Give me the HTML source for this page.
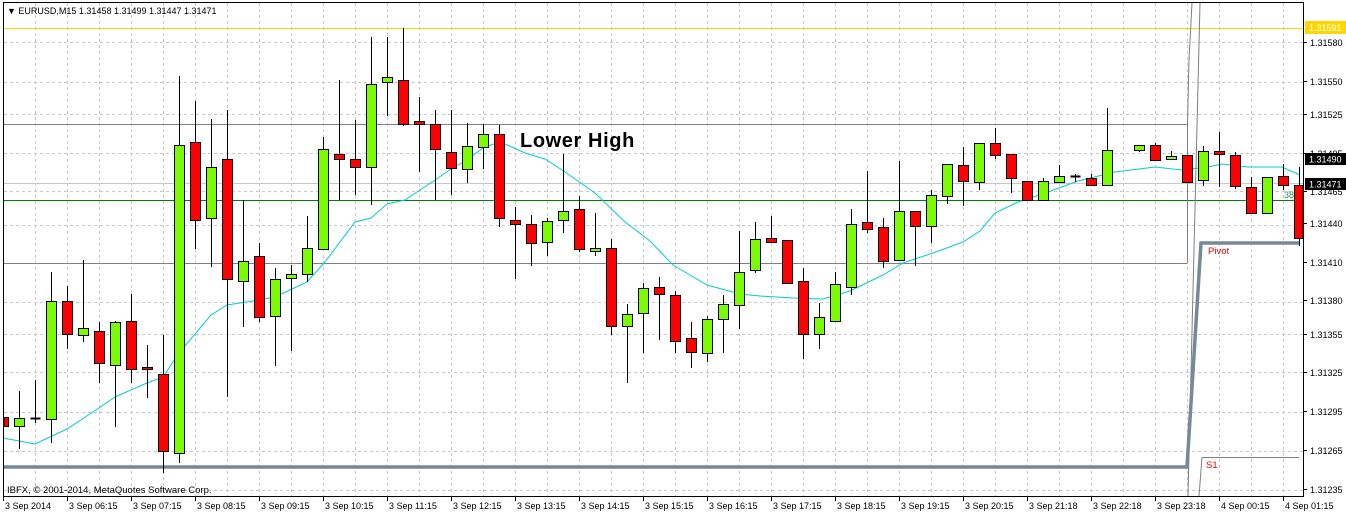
<!DOCTYPE html>
<html><head><meta charset="utf-8"><style>
html,body{margin:0;padding:0;background:#fff;width:1346px;height:514px;overflow:hidden}
svg{display:block}
text{font-family:"Liberation Sans",Arial,sans-serif}
</style></head><body>
<svg id="s" width="1346" height="514" xmlns="http://www.w3.org/2000/svg">
<rect width="1346" height="514" fill="#fff"/>
<g id="grid"></g>
<line x1="3" y1="28.5" x2="1303" y2="28.5" stroke="#ffd700" stroke-width="1"/>
<line x1="3" y1="124.5" x2="1187" y2="124.5" stroke="#808080"/>
<line x1="3" y1="183.5" x2="1303" y2="183.5" stroke="#c8c8c8"/>
<line x1="3" y1="200.5" x2="1303" y2="200.5" stroke="#008000"/>
<line x1="3" y1="263.5" x2="1187" y2="263.5" stroke="#808080"/>
<polyline points="1187.5,263 1187.5,124 1189,60 1192,3" fill="none" stroke="#808080"/>
<polyline points="1188,496 1200,3" fill="none" stroke="#808080"/>
<polyline points="1199,496 1202,457.5 1299,457.5" fill="none" stroke="#808080"/>
<polyline points="3,467 1187,467 1201,243 1300,243" fill="none" stroke="#778899" stroke-width="3.5"/>
<polyline fill="none" stroke="#00ced1" stroke-width="1" points="3,438 35,444 67,429 99,408 115,397 147,383 163,377 179,353 211,315 227,305 259,300 275,297 307,282 325,262 355,222 371,218 387,204 405,200 435,180 451,169 467,160 483,148 499,142 505,144 525,153 545,159 565,172 595,193 625,222 650,241 673,265 707,285 740,294 760,296 793,298 823,299 850,291 883,275 903,263 933,253 963,242 980,231 995,213 1018,202 1048,192 1078,181 1115,172 1155,167 1182,170 1208,167 1222,164 1248,167 1282,167 1300,175"/>
<g id="candles"></g>
<line x1="3.5" y1="2" x2="3.5" y2="497" stroke="#000"/>
<line x1="3" y1="2.5" x2="1304" y2="2.5" stroke="#000"/>
<line x1="1303.5" y1="2" x2="1303.5" y2="497" stroke="#000"/>
<line x1="3" y1="496.5" x2="1304" y2="496.5" stroke="#000"/>
<g id="ticks"></g>
<text x="7" y="14" font-size="9" fill="#000">▼ EURUSD,M15  1.31458 1.31499 1.31447 1.31471</text>
<text x="520" y="147" font-size="20" font-weight="bold" fill="#000" letter-spacing="0.6">Lower High</text>
<text x="1208" y="254" font-size="9.5" fill="#ff0000">Pivot</text>
<text x="1206" y="468" font-size="9.5" fill="#ff0000">S1</text>
<text x="1284" y="198" font-size="9" fill="#2e8b57">38</text>
<text x="7" y="493" font-size="9.5" fill="#000">IBFX, © 2001-2014, MetaQuotes Software Corp.</text>
<g font-size="9" fill="#000">
<text x="1310" y="46">1.31580</text>
<text x="1310" y="85">1.31550</text>
<text x="1310" y="118">1.31525</text>
<text x="1310" y="157">1.31495</text>
<text x="1310" y="195">1.31465</text>
<text x="1310" y="227">1.31440</text>
<text x="1310" y="266">1.31410</text>
<text x="1310" y="304">1.31380</text>
<text x="1310" y="338">1.31355</text>
<text x="1310" y="376">1.31325</text>
<text x="1310" y="415">1.31295</text>
<text x="1310" y="454">1.31265</text>
<text x="1310" y="493">1.31235</text>
</g>
<rect x="1305" y="21" width="41" height="13" fill="#ffd700"/>
<text x="1309" y="31" font-size="9" fill="#fff">1.31591</text>
<rect x="1305" y="153" width="41" height="12" fill="#000"/>
<text x="1309" y="162.5" font-size="9" fill="#fff">1.31490</text>
<rect x="1305" y="178" width="41" height="12" fill="#000"/>
<text x="1309" y="187.5" font-size="9" fill="#fff">1.31471</text>
<g font-size="9" fill="#000">
<text x="5" y="509">3 Sep 2014</text>
<text x="69" y="509">3 Sep 06:15</text>
<text x="133" y="509">3 Sep 07:15</text>
<text x="197" y="509">3 Sep 08:15</text>
<text x="261" y="509">3 Sep 09:15</text>
<text x="325" y="509">3 Sep 10:15</text>
<text x="389" y="509">3 Sep 11:15</text>
<text x="453" y="509">3 Sep 12:15</text>
<text x="517" y="509">3 Sep 13:15</text>
<text x="581" y="509">3 Sep 14:15</text>
<text x="645" y="509">3 Sep 15:15</text>
<text x="709" y="509">3 Sep 16:15</text>
<text x="773" y="509">3 Sep 17:15</text>
<text x="837" y="509">3 Sep 18:15</text>
<text x="901" y="509">3 Sep 19:15</text>
<text x="965" y="509">3 Sep 20:15</text>
<text x="1029" y="509">3 Sep 21:18</text>
<text x="1093" y="509">3 Sep 22:18</text>
<text x="1157" y="509">3 Sep 23:18</text>
<text x="1221" y="509">4 Sep 00:15</text>
<text x="1285" y="509">4 Sep 01:15</text>
</g>
</svg>
<script>
var NS="http://www.w3.org/2000/svg";
function el(p,t,a){var e=document.createElementNS(NS,t);for(var k in a)e.setAttribute(k,a[k]);p.appendChild(e);return e;}
var g=document.getElementById('grid');
[42,82,114,153,191,225,302,334,372,412,451,490].forEach(function(y){el(g,'line',{x1:4,y1:y+.5,x2:1303,y2:y+.5,stroke:'#c8c8c8','stroke-dasharray':'3,3'});});
for(var x=35.5;x<1303;x+=32)el(g,'line',{x1:x,y1:3,x2:x,y2:496,stroke:'#c8c8c8','stroke-dasharray':'3,3'});
var tk=document.getElementById('ticks');
[42,81,114,153,191,223,262,300,334,372,411,450,489].forEach(function(y){el(tk,'line',{x1:1303,y1:y+.5,x2:1307,y2:y+.5,stroke:'#000'});});
for(var x=3.5;x<1303;x+=64)el(tk,'line',{x1:x,y1:496,x2:x,y2:501,stroke:'#000'});
var D=[
[0,'r',417,426,384,437],[1,'g',418,426,391,449],[2,'d',418,418,380,423],[3,'g',301,419,272,443],[4,'r',301,334,286,349],
[5,'g',328,335,260,342],[6,'r',331,363,322,383],[7,'g',322,365,321,427],[8,'r',321,369,294,383],[9,'r',367,369,345,398],
[10,'r',374,451,335,473],[11,'g',145,453,76,463],[12,'r',142,220,101,249],[13,'g',167,218,119,267],[14,'r',159,279,110,397],
[15,'g',261,281,200,327],[16,'r',256,317,243,322],[17,'g',279,316,268,366],[18,'g',274,278,265,351],[19,'g',248,274,216,282],
[20,'g',149,249,137,249],[21,'r',154,159,80,200],[22,'r',159,167,120,195],[23,'g',84,167,37,205],[24,'g',77,82,37,116],
[25,'r',80,124,28,126],[26,'r',121,124,97,172],[27,'r',124,149,110,200],[28,'r',152,168,110,195],[29,'g',146,169,123,183],
[30,'g',134,147,124,169],[31,'r',134,218,125,227],[32,'r',220,224,207,279],[33,'r',224,243,215,266],[34,'g',221,242,218,256],
[35,'g',211,220,154,233],[36,'r',209,249,196,252],[37,'g',248,251,213,256],[38,'r',248,326,239,335],[39,'g',314,326,304,383],
[40,'g',288,313,283,353],[41,'r',287,294,277,340],[42,'r',295,341,291,353],[43,'r',338,352,322,368],[44,'g',319,353,316,362],
[45,'g',304,319,295,353],[46,'g',272,305,231,329],[47,'g',239,270,222,273],[48,'r',238,242,216,242],[49,'r',240,283,240,284],
[50,'r',281,334,268,359],[51,'g',317,334,303,349],[52,'g',284,321,272,321],[53,'g',224,287,209,295],[54,'r',222,229,171,233],
[55,'r',227,261,218,268],[56,'g',211,260,161,260],[57,'r',211,226,211,266],[58,'g',195,226,190,243],[59,'g',164,196,164,204],
[60,'r',165,181,147,206],[61,'g',143,182,143,190],[62,'r',143,155,128,159],[63,'r',154,178,154,193],[64,'r',181,200,181,200],
[65,'g',181,200,178,200],[66,'g',176,182,165,182],[67,'d',176,176,174,182],[68,'r',178,185,174,185],[69,'g',150,185,108,185],
[71,'g',145,150,145,152],[72,'r',145,160,143,160],[73,'g',156,159,151,160],[74,'r',155,182,155,183],[75,'g',151,180,146,186],
[76,'r',151,154,132,187],[77,'r',155,186,152,189],[78,'r',187,213,177,213],[79,'g',177,213,177,214],[80,'r',176,185,164,190],
[81,'r',185,238,167,246]];
var cg=document.getElementById('candles');
D.forEach(function(d){var c=3.5+16*d[0];
el(cg,'line',{x1:c,y1:d[4],x2:c,y2:d[5],stroke:'#000','stroke-width':1});
if(d[1]=='d'){el(cg,'line',{x1:c-5,y1:d[2]+.5,x2:c+5,y2:d[2]+.5,stroke:'#000','stroke-width':2});return;}
var x0=Math.max(c-5,4),x1=Math.min(c+5,1303);
el(cg,'rect',{x:x0,y:d[2]+.5,width:x1-x0,height:Math.max(d[3]-d[2],2),fill:d[1]=='g'?'#7cfc00':'#ff0000',stroke:'#000','stroke-width':1});
});
</script>
</body></html>
